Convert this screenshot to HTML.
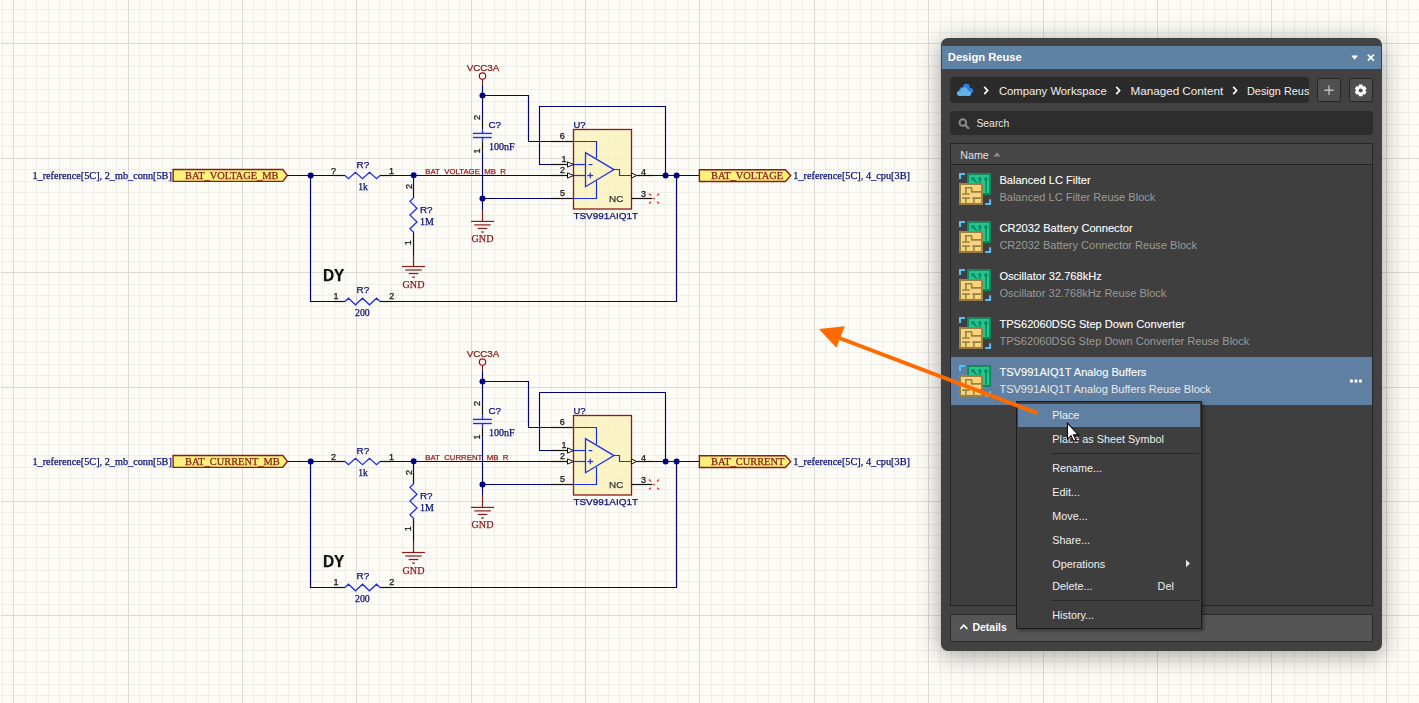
<!DOCTYPE html>
<html><head><meta charset="utf-8">
<style>
html,body{margin:0;padding:0;width:1419px;height:703px;overflow:hidden;background:#fdfbf6}
#root{position:relative;width:1419px;height:703px;overflow:hidden}
.ab{position:absolute;box-sizing:border-box}
.ui{font-family:'Liberation Sans',sans-serif;}
</style></head><body><div id="root">
<svg width="1419" height="703" viewBox="0 0 1419 703" style="position:absolute;left:0;top:0;will-change:transform">
<rect x="0" y="0" width="1419" height="703" fill="#fdfbf6"/>
<rect x="2" y="0" width="1" height="703" fill="#eeede8"/>
<rect x="25" y="0" width="1" height="703" fill="#eeede8"/>
<rect x="36" y="0" width="1" height="703" fill="#eeede8"/>
<rect x="48" y="0" width="1" height="703" fill="#eeede8"/>
<rect x="59" y="0" width="1" height="703" fill="#eeede8"/>
<rect x="70" y="0" width="1" height="703" fill="#eeede8"/>
<rect x="82" y="0" width="1" height="703" fill="#eeede8"/>
<rect x="93" y="0" width="1" height="703" fill="#eeede8"/>
<rect x="105" y="0" width="1" height="703" fill="#eeede8"/>
<rect x="116" y="0" width="1" height="703" fill="#eeede8"/>
<rect x="139" y="0" width="1" height="703" fill="#eeede8"/>
<rect x="151" y="0" width="1" height="703" fill="#eeede8"/>
<rect x="162" y="0" width="1" height="703" fill="#eeede8"/>
<rect x="173" y="0" width="1" height="703" fill="#eeede8"/>
<rect x="185" y="0" width="1" height="703" fill="#eeede8"/>
<rect x="196" y="0" width="1" height="703" fill="#eeede8"/>
<rect x="208" y="0" width="1" height="703" fill="#eeede8"/>
<rect x="219" y="0" width="1" height="703" fill="#eeede8"/>
<rect x="231" y="0" width="1" height="703" fill="#eeede8"/>
<rect x="253" y="0" width="1" height="703" fill="#eeede8"/>
<rect x="265" y="0" width="1" height="703" fill="#eeede8"/>
<rect x="276" y="0" width="1" height="703" fill="#eeede8"/>
<rect x="288" y="0" width="1" height="703" fill="#eeede8"/>
<rect x="299" y="0" width="1" height="703" fill="#eeede8"/>
<rect x="311" y="0" width="1" height="703" fill="#eeede8"/>
<rect x="322" y="0" width="1" height="703" fill="#eeede8"/>
<rect x="334" y="0" width="1" height="703" fill="#eeede8"/>
<rect x="345" y="0" width="1" height="703" fill="#eeede8"/>
<rect x="368" y="0" width="1" height="703" fill="#eeede8"/>
<rect x="379" y="0" width="1" height="703" fill="#eeede8"/>
<rect x="391" y="0" width="1" height="703" fill="#eeede8"/>
<rect x="402" y="0" width="1" height="703" fill="#eeede8"/>
<rect x="414" y="0" width="1" height="703" fill="#eeede8"/>
<rect x="425" y="0" width="1" height="703" fill="#eeede8"/>
<rect x="436" y="0" width="1" height="703" fill="#eeede8"/>
<rect x="448" y="0" width="1" height="703" fill="#eeede8"/>
<rect x="459" y="0" width="1" height="703" fill="#eeede8"/>
<rect x="482" y="0" width="1" height="703" fill="#eeede8"/>
<rect x="494" y="0" width="1" height="703" fill="#eeede8"/>
<rect x="505" y="0" width="1" height="703" fill="#eeede8"/>
<rect x="516" y="0" width="1" height="703" fill="#eeede8"/>
<rect x="528" y="0" width="1" height="703" fill="#eeede8"/>
<rect x="539" y="0" width="1" height="703" fill="#eeede8"/>
<rect x="551" y="0" width="1" height="703" fill="#eeede8"/>
<rect x="562" y="0" width="1" height="703" fill="#eeede8"/>
<rect x="574" y="0" width="1" height="703" fill="#eeede8"/>
<rect x="597" y="0" width="1" height="703" fill="#eeede8"/>
<rect x="608" y="0" width="1" height="703" fill="#eeede8"/>
<rect x="619" y="0" width="1" height="703" fill="#eeede8"/>
<rect x="631" y="0" width="1" height="703" fill="#eeede8"/>
<rect x="642" y="0" width="1" height="703" fill="#eeede8"/>
<rect x="654" y="0" width="1" height="703" fill="#eeede8"/>
<rect x="665" y="0" width="1" height="703" fill="#eeede8"/>
<rect x="677" y="0" width="1" height="703" fill="#eeede8"/>
<rect x="688" y="0" width="1" height="703" fill="#eeede8"/>
<rect x="711" y="0" width="1" height="703" fill="#eeede8"/>
<rect x="722" y="0" width="1" height="703" fill="#eeede8"/>
<rect x="734" y="0" width="1" height="703" fill="#eeede8"/>
<rect x="745" y="0" width="1" height="703" fill="#eeede8"/>
<rect x="757" y="0" width="1" height="703" fill="#eeede8"/>
<rect x="768" y="0" width="1" height="703" fill="#eeede8"/>
<rect x="780" y="0" width="1" height="703" fill="#eeede8"/>
<rect x="791" y="0" width="1" height="703" fill="#eeede8"/>
<rect x="802" y="0" width="1" height="703" fill="#eeede8"/>
<rect x="825" y="0" width="1" height="703" fill="#eeede8"/>
<rect x="837" y="0" width="1" height="703" fill="#eeede8"/>
<rect x="848" y="0" width="1" height="703" fill="#eeede8"/>
<rect x="860" y="0" width="1" height="703" fill="#eeede8"/>
<rect x="871" y="0" width="1" height="703" fill="#eeede8"/>
<rect x="882" y="0" width="1" height="703" fill="#eeede8"/>
<rect x="894" y="0" width="1" height="703" fill="#eeede8"/>
<rect x="905" y="0" width="1" height="703" fill="#eeede8"/>
<rect x="917" y="0" width="1" height="703" fill="#eeede8"/>
<rect x="940" y="0" width="1" height="703" fill="#eeede8"/>
<rect x="951" y="0" width="1" height="703" fill="#eeede8"/>
<rect x="962" y="0" width="1" height="703" fill="#eeede8"/>
<rect x="974" y="0" width="1" height="703" fill="#eeede8"/>
<rect x="985" y="0" width="1" height="703" fill="#eeede8"/>
<rect x="997" y="0" width="1" height="703" fill="#eeede8"/>
<rect x="1008" y="0" width="1" height="703" fill="#eeede8"/>
<rect x="1020" y="0" width="1" height="703" fill="#eeede8"/>
<rect x="1031" y="0" width="1" height="703" fill="#eeede8"/>
<rect x="1054" y="0" width="1" height="703" fill="#eeede8"/>
<rect x="1065" y="0" width="1" height="703" fill="#eeede8"/>
<rect x="1077" y="0" width="1" height="703" fill="#eeede8"/>
<rect x="1088" y="0" width="1" height="703" fill="#eeede8"/>
<rect x="1100" y="0" width="1" height="703" fill="#eeede8"/>
<rect x="1111" y="0" width="1" height="703" fill="#eeede8"/>
<rect x="1123" y="0" width="1" height="703" fill="#eeede8"/>
<rect x="1134" y="0" width="1" height="703" fill="#eeede8"/>
<rect x="1145" y="0" width="1" height="703" fill="#eeede8"/>
<rect x="1168" y="0" width="1" height="703" fill="#eeede8"/>
<rect x="1180" y="0" width="1" height="703" fill="#eeede8"/>
<rect x="1191" y="0" width="1" height="703" fill="#eeede8"/>
<rect x="1203" y="0" width="1" height="703" fill="#eeede8"/>
<rect x="1214" y="0" width="1" height="703" fill="#eeede8"/>
<rect x="1226" y="0" width="1" height="703" fill="#eeede8"/>
<rect x="1237" y="0" width="1" height="703" fill="#eeede8"/>
<rect x="1248" y="0" width="1" height="703" fill="#eeede8"/>
<rect x="1260" y="0" width="1" height="703" fill="#eeede8"/>
<rect x="1283" y="0" width="1" height="703" fill="#eeede8"/>
<rect x="1294" y="0" width="1" height="703" fill="#eeede8"/>
<rect x="1306" y="0" width="1" height="703" fill="#eeede8"/>
<rect x="1317" y="0" width="1" height="703" fill="#eeede8"/>
<rect x="1328" y="0" width="1" height="703" fill="#eeede8"/>
<rect x="1340" y="0" width="1" height="703" fill="#eeede8"/>
<rect x="1351" y="0" width="1" height="703" fill="#eeede8"/>
<rect x="1363" y="0" width="1" height="703" fill="#eeede8"/>
<rect x="1374" y="0" width="1" height="703" fill="#eeede8"/>
<rect x="1397" y="0" width="1" height="703" fill="#eeede8"/>
<rect x="1408" y="0" width="1" height="703" fill="#eeede8"/>
<rect x="1" y="9" width="1418" height="1" fill="#eeede8"/>
<rect x="1" y="21" width="1418" height="1" fill="#eeede8"/>
<rect x="1" y="32" width="1418" height="1" fill="#eeede8"/>
<rect x="1" y="55" width="1418" height="1" fill="#eeede8"/>
<rect x="1" y="66" width="1418" height="1" fill="#eeede8"/>
<rect x="1" y="78" width="1418" height="1" fill="#eeede8"/>
<rect x="1" y="89" width="1418" height="1" fill="#eeede8"/>
<rect x="1" y="101" width="1418" height="1" fill="#eeede8"/>
<rect x="1" y="112" width="1418" height="1" fill="#eeede8"/>
<rect x="1" y="124" width="1418" height="1" fill="#eeede8"/>
<rect x="1" y="135" width="1418" height="1" fill="#eeede8"/>
<rect x="1" y="146" width="1418" height="1" fill="#eeede8"/>
<rect x="1" y="169" width="1418" height="1" fill="#eeede8"/>
<rect x="1" y="181" width="1418" height="1" fill="#eeede8"/>
<rect x="1" y="192" width="1418" height="1" fill="#eeede8"/>
<rect x="1" y="204" width="1418" height="1" fill="#eeede8"/>
<rect x="1" y="215" width="1418" height="1" fill="#eeede8"/>
<rect x="1" y="226" width="1418" height="1" fill="#eeede8"/>
<rect x="1" y="238" width="1418" height="1" fill="#eeede8"/>
<rect x="1" y="249" width="1418" height="1" fill="#eeede8"/>
<rect x="1" y="261" width="1418" height="1" fill="#eeede8"/>
<rect x="1" y="284" width="1418" height="1" fill="#eeede8"/>
<rect x="1" y="295" width="1418" height="1" fill="#eeede8"/>
<rect x="1" y="306" width="1418" height="1" fill="#eeede8"/>
<rect x="1" y="318" width="1418" height="1" fill="#eeede8"/>
<rect x="1" y="329" width="1418" height="1" fill="#eeede8"/>
<rect x="1" y="341" width="1418" height="1" fill="#eeede8"/>
<rect x="1" y="352" width="1418" height="1" fill="#eeede8"/>
<rect x="1" y="364" width="1418" height="1" fill="#eeede8"/>
<rect x="1" y="375" width="1418" height="1" fill="#eeede8"/>
<rect x="1" y="398" width="1418" height="1" fill="#eeede8"/>
<rect x="1" y="409" width="1418" height="1" fill="#eeede8"/>
<rect x="1" y="421" width="1418" height="1" fill="#eeede8"/>
<rect x="1" y="432" width="1418" height="1" fill="#eeede8"/>
<rect x="1" y="444" width="1418" height="1" fill="#eeede8"/>
<rect x="1" y="455" width="1418" height="1" fill="#eeede8"/>
<rect x="1" y="467" width="1418" height="1" fill="#eeede8"/>
<rect x="1" y="478" width="1418" height="1" fill="#eeede8"/>
<rect x="1" y="489" width="1418" height="1" fill="#eeede8"/>
<rect x="1" y="512" width="1418" height="1" fill="#eeede8"/>
<rect x="1" y="524" width="1418" height="1" fill="#eeede8"/>
<rect x="1" y="535" width="1418" height="1" fill="#eeede8"/>
<rect x="1" y="547" width="1418" height="1" fill="#eeede8"/>
<rect x="1" y="558" width="1418" height="1" fill="#eeede8"/>
<rect x="1" y="570" width="1418" height="1" fill="#eeede8"/>
<rect x="1" y="581" width="1418" height="1" fill="#eeede8"/>
<rect x="1" y="592" width="1418" height="1" fill="#eeede8"/>
<rect x="1" y="604" width="1418" height="1" fill="#eeede8"/>
<rect x="1" y="627" width="1418" height="1" fill="#eeede8"/>
<rect x="1" y="638" width="1418" height="1" fill="#eeede8"/>
<rect x="1" y="650" width="1418" height="1" fill="#eeede8"/>
<rect x="1" y="661" width="1418" height="1" fill="#eeede8"/>
<rect x="1" y="672" width="1418" height="1" fill="#eeede8"/>
<rect x="1" y="684" width="1418" height="1" fill="#eeede8"/>
<rect x="1" y="695" width="1418" height="1" fill="#eeede8"/>
<rect x="13" y="0" width="1" height="703" fill="#dbdad6"/>
<rect x="128" y="0" width="1" height="703" fill="#dbdad6"/>
<rect x="242" y="0" width="1" height="703" fill="#dbdad6"/>
<rect x="356" y="0" width="1" height="703" fill="#dbdad6"/>
<rect x="471" y="0" width="1" height="703" fill="#dbdad6"/>
<rect x="585" y="0" width="1" height="703" fill="#dbdad6"/>
<rect x="699" y="0" width="1" height="703" fill="#dbdad6"/>
<rect x="814" y="0" width="1" height="703" fill="#dbdad6"/>
<rect x="928" y="0" width="1" height="703" fill="#dbdad6"/>
<rect x="1043" y="0" width="1" height="703" fill="#dbdad6"/>
<rect x="1157" y="0" width="1" height="703" fill="#dbdad6"/>
<rect x="1271" y="0" width="1" height="703" fill="#dbdad6"/>
<rect x="1386" y="0" width="1" height="703" fill="#dbdad6"/>
<rect x="1" y="43" width="1418" height="1" fill="#dbdad6"/>
<rect x="1" y="158" width="1418" height="1" fill="#dbdad6"/>
<rect x="1" y="272" width="1418" height="1" fill="#dbdad6"/>
<rect x="1" y="387" width="1418" height="1" fill="#dbdad6"/>
<rect x="1" y="501" width="1418" height="1" fill="#dbdad6"/>
<rect x="1" y="615" width="1418" height="1" fill="#dbdad6"/>
<text x="32.40" y="179.30" fill="#0b1078" font-family="'Liberation Serif', serif" font-size="10.25" font-weight="400"  stroke="#0b1078" stroke-width="0.25">1_reference[5C], 2_mb_conn[5B]</text>
<polygon points="173.1,169.5 282.8,169.5 287.3,175.45 282.8,181.4 173.1,181.4" fill="#fbf27a" stroke="#8c1a1a" stroke-width="1.4"/><text x="185.00" y="178.50" fill="#8c1a1a" font-family="'Liberation Serif', serif" font-size="10.4" font-weight="400"  stroke="#8c1a1a" stroke-width="0.25">BAT_VOLTAGE_MB</text>
<text x="425.30" y="173.70" fill="#9a1c1c" font-family="'Liberation Sans', sans-serif" font-size="7.8" font-weight="400" stroke="#9a1c1c" stroke-width="0.25">BAT_VOLTAGE_MB_R</text>
<polyline points="287.30,175.50 334.00,175.50" fill="none" stroke="#000080" stroke-width="1.15" stroke-linejoin="miter"/>
<polyline points="334.00,175.50 345.00,175.50" fill="none" stroke="#111" stroke-width="1.2" stroke-linejoin="miter"/>
<polyline points="345.00,175.50 348.50,178.70 355.50,172.30 362.50,178.70 369.50,172.30 376.50,178.70 380.00,175.50" fill="none" stroke="#1e2ef0" stroke-width="1.3" stroke-linejoin="miter"/>
<polyline points="380.00,175.50 391.00,175.50" fill="none" stroke="#111" stroke-width="1.2" stroke-linejoin="miter"/>
<polyline points="391.00,175.50 551.00,175.50" fill="none" stroke="#000080" stroke-width="1.15" stroke-linejoin="miter"/>
<text x="331.00" y="174.20" fill="#111" font-family="'Liberation Sans', sans-serif" font-size="9.0" font-weight="400"  stroke="#111" stroke-width="0.25">?</text>
<text x="389.00" y="173.60" fill="#111" font-family="'Liberation Sans', sans-serif" font-size="9.0" font-weight="400"  stroke="#111" stroke-width="0.25">1</text>
<text x="356.50" y="167.80" fill="#0b1078" font-family="'Liberation Sans', sans-serif" font-size="9.9" font-weight="400"  stroke="#0b1078" stroke-width="0.25">R?</text>
<text x="358.20" y="190.00" fill="#0b1078" font-family="'Liberation Serif', serif" font-size="9.6" font-weight="400"  stroke="#0b1078" stroke-width="0.25">1k</text>
<polyline points="310.50,175.50 310.50,301.50 334.00,301.50" fill="none" stroke="#000080" stroke-width="1.15" stroke-linejoin="miter"/>
<polyline points="334.00,301.50 345.00,301.50" fill="none" stroke="#111" stroke-width="1.2" stroke-linejoin="miter"/>
<polyline points="345.00,301.50 348.50,298.20 355.50,304.80 362.50,298.20 369.50,304.80 376.50,298.20 380.00,301.50" fill="none" stroke="#1e2ef0" stroke-width="1.3" stroke-linejoin="miter"/>
<polyline points="380.00,301.50 391.00,301.50" fill="none" stroke="#111" stroke-width="1.2" stroke-linejoin="miter"/>
<polyline points="391.00,301.50 676.50,301.50 676.50,175.50" fill="none" stroke="#000080" stroke-width="1.15" stroke-linejoin="miter"/>
<text x="333.50" y="298.60" fill="#111" font-family="'Liberation Sans', sans-serif" font-size="9.0" font-weight="400"  stroke="#111" stroke-width="0.25">1</text>
<text x="389.20" y="298.60" fill="#111" font-family="'Liberation Sans', sans-serif" font-size="9.0" font-weight="400"  stroke="#111" stroke-width="0.25">2</text>
<text x="356.50" y="292.80" fill="#0b1078" font-family="'Liberation Sans', sans-serif" font-size="9.9" font-weight="400"  stroke="#0b1078" stroke-width="0.25">R?</text>
<text x="355.00" y="316.00" fill="#0b1078" font-family="'Liberation Serif', serif" font-size="9.8" font-weight="400"  stroke="#0b1078" stroke-width="0.25">200</text>
<text x="322.90" y="280.90" fill="#111" font-family="'Liberation Sans', sans-serif" font-size="16.6" font-weight="700" textLength="21.4" lengthAdjust="spacingAndGlyphs" stroke="#111" stroke-width="0.25">DY</text>
<polyline points="413.50,175.50 413.50,186.80" fill="none" stroke="#000080" stroke-width="1.15" stroke-linejoin="miter"/>
<polyline points="413.50,186.80 413.50,197.90" fill="none" stroke="#111" stroke-width="1.2" stroke-linejoin="miter"/>
<polyline points="413.50,197.90 410.00,201.34 417.00,208.22 410.00,215.10 417.00,221.98 410.00,228.86 413.50,232.30" fill="none" stroke="#1e2ef0" stroke-width="1.3" stroke-linejoin="miter"/>
<polyline points="413.50,232.30 413.50,243.90" fill="none" stroke="#111" stroke-width="1.2" stroke-linejoin="miter"/>
<polyline points="413.50,243.90 413.50,255.00" fill="none" stroke="#000080" stroke-width="1.15" stroke-linejoin="miter"/>
<polyline points="413.50,255.00 413.50,266.50" fill="none" stroke="#8c1a1a" stroke-width="1.2" stroke-linejoin="miter"/>
<polyline points="402.00,266.50 425.00,266.50" fill="none" stroke="#8c1a1a" stroke-width="1.2" stroke-linejoin="miter"/><polyline points="405.30,270.00 421.70,270.00" fill="none" stroke="#8c1a1a" stroke-width="1.2" stroke-linejoin="miter"/><polyline points="408.70,273.55 418.30,273.55" fill="none" stroke="#8c1a1a" stroke-width="1.2" stroke-linejoin="miter"/><polyline points="412.10,277.10 414.90,277.10" fill="none" stroke="#8c1a1a" stroke-width="1.2" stroke-linejoin="miter"/><text x="413.50" y="287.90" fill="#8c1a1a" font-family="'Liberation Serif', serif" font-size="10.1" font-weight="400" text-anchor="middle" stroke="#8c1a1a" stroke-width="0.25">GND</text>
<text x="0" y="0" fill="#111" stroke="#111" stroke-width="0.25" font-family="'Liberation Sans', sans-serif" font-size="9.0" text-anchor="middle" dominant-baseline="central" transform="translate(408.50,186.50) rotate(-90)">2</text>
<text x="0" y="0" fill="#111" stroke="#111" stroke-width="0.25" font-family="'Liberation Sans', sans-serif" font-size="9.0" text-anchor="middle" dominant-baseline="central" transform="translate(408.20,242.80) rotate(-90)">1</text>
<text x="419.90" y="212.80" fill="#0b1078" font-family="'Liberation Sans', sans-serif" font-size="9.9" font-weight="400"  stroke="#0b1078" stroke-width="0.25">R?</text>
<text x="420.00" y="225.10" fill="#0b1078" font-family="'Liberation Serif', serif" font-size="10.0" font-weight="400"  stroke="#0b1078" stroke-width="0.25">1M</text>
<text x="483.00" y="71.00" fill="#8c1a1a" font-family="'Liberation Sans', sans-serif" font-size="9.8" font-weight="400" text-anchor="middle" stroke="#8c1a1a" stroke-width="0.25">VCC3A</text>
<circle cx="482.5" cy="76.10" r="3.2" fill="none" stroke="#8c1a1a" stroke-width="1.2"/>
<polyline points="482.50,79.30 482.50,84.50" fill="none" stroke="#8c1a1a" stroke-width="1.2" stroke-linejoin="miter"/>
<polyline points="482.50,84.50 482.50,118.90" fill="none" stroke="#000080" stroke-width="1.15" stroke-linejoin="miter"/>
<polyline points="482.50,118.90 482.50,129.20" fill="none" stroke="#111" stroke-width="1.2" stroke-linejoin="miter"/>
<polyline points="482.50,129.20 482.50,133.40" fill="none" stroke="#1e2ef0" stroke-width="1.3" stroke-linejoin="miter"/>
<polyline points="473.00,133.40 491.90,133.40" fill="none" stroke="#1e2ef0" stroke-width="1.4" stroke-linejoin="miter"/>
<polyline points="473.00,137.50 491.90,137.50" fill="none" stroke="#1e2ef0" stroke-width="1.4" stroke-linejoin="miter"/>
<polyline points="482.50,137.50 482.50,141.80" fill="none" stroke="#1e2ef0" stroke-width="1.3" stroke-linejoin="miter"/>
<polyline points="482.50,141.80 482.50,151.80" fill="none" stroke="#111" stroke-width="1.2" stroke-linejoin="miter"/>
<polyline points="482.50,151.80 482.50,209.00" fill="none" stroke="#000080" stroke-width="1.15" stroke-linejoin="miter"/>
<polyline points="482.50,209.00 482.50,221.40" fill="none" stroke="#8c1a1a" stroke-width="1.2" stroke-linejoin="miter"/>
<polyline points="471.00,221.40 494.00,221.40" fill="none" stroke="#8c1a1a" stroke-width="1.2" stroke-linejoin="miter"/><polyline points="474.30,224.90 490.70,224.90" fill="none" stroke="#8c1a1a" stroke-width="1.2" stroke-linejoin="miter"/><polyline points="477.70,228.45 487.30,228.45" fill="none" stroke="#8c1a1a" stroke-width="1.2" stroke-linejoin="miter"/><polyline points="481.10,232.00 483.90,232.00" fill="none" stroke="#8c1a1a" stroke-width="1.2" stroke-linejoin="miter"/><text x="482.50" y="241.90" fill="#8c1a1a" font-family="'Liberation Serif', serif" font-size="10.1" font-weight="400" text-anchor="middle" stroke="#8c1a1a" stroke-width="0.25">GND</text>
<text x="0" y="0" fill="#111" stroke="#111" stroke-width="0.25" font-family="'Liberation Sans', sans-serif" font-size="9.0" text-anchor="middle" dominant-baseline="central" transform="translate(476.60,117.60) rotate(-90)">2</text>
<text x="0" y="0" fill="#111" stroke="#111" stroke-width="0.25" font-family="'Liberation Sans', sans-serif" font-size="9.0" text-anchor="middle" dominant-baseline="central" transform="translate(476.60,151.00) rotate(-90)">1</text>
<text x="488.40" y="127.90" fill="#0b1078" font-family="'Liberation Sans', sans-serif" font-size="9.9" font-weight="400"  stroke="#0b1078" stroke-width="0.25">C?</text>
<text x="488.90" y="149.80" fill="#0b1078" font-family="'Liberation Serif', serif" font-size="10.0" font-weight="400"  stroke="#0b1078" stroke-width="0.25">100nF</text>
<polyline points="482.50,95.50 528.50,95.50 528.50,141.50 551.00,141.50" fill="none" stroke="#000080" stroke-width="1.15" stroke-linejoin="miter"/>
<polyline points="482.50,198.50 551.00,198.50" fill="none" stroke="#000080" stroke-width="1.15" stroke-linejoin="miter"/>
<polyline points="551.00,164.50 539.50,164.50 539.50,106.50 665.50,106.50 665.50,175.50" fill="none" stroke="#000080" stroke-width="1.15" stroke-linejoin="miter"/>
<polyline points="551.00,141.50 573.40,141.50" fill="none" stroke="#111" stroke-width="1.2" stroke-linejoin="miter"/>
<polyline points="551.00,164.50 573.40,164.50" fill="none" stroke="#111" stroke-width="1.2" stroke-linejoin="miter"/>
<polyline points="551.00,175.50 573.40,175.50" fill="none" stroke="#111" stroke-width="1.2" stroke-linejoin="miter"/>
<polyline points="551.00,198.50 573.40,198.50" fill="none" stroke="#111" stroke-width="1.2" stroke-linejoin="miter"/>
<rect x="573.5" y="129.50" width="58" height="79.5" fill="#f9f3bc" fill-opacity="0.8" stroke="#8c1a1a" stroke-width="1.3"/>
<text x="573.60" y="127.90" fill="#0b1078" font-family="'Liberation Sans', sans-serif" font-size="9.4" font-weight="400"  stroke="#0b1078" stroke-width="0.25">U?</text>
<text x="573.40" y="218.60" fill="#0b1078" font-family="'Liberation Sans', sans-serif" font-size="9.95" font-weight="400"  stroke="#0b1078" stroke-width="0.25">TSV991AIQ1T</text>
<polyline points="573.50,141.50 596.50,141.50 596.50,157.90" fill="none" stroke="#1e2ef0" stroke-width="1.2" stroke-linejoin="miter"/>
<polyline points="573.50,198.50 596.50,198.50 596.50,180.90" fill="none" stroke="#1e2ef0" stroke-width="1.2" stroke-linejoin="miter"/>
<polyline points="573.50,164.50 585.50,164.50" fill="none" stroke="#1e2ef0" stroke-width="1.2" stroke-linejoin="miter"/>
<polyline points="573.50,175.50 585.50,175.50" fill="none" stroke="#1e2ef0" stroke-width="1.2" stroke-linejoin="miter"/>
<polygon points="585.5,152.60 585.5,186.70 614,169.60" fill="none" stroke="#1e2ef0" stroke-width="1.3"/>
<polyline points="614.00,169.50 619.50,169.50 619.50,175.50 631.50,175.50" fill="none" stroke="#1e2ef0" stroke-width="1.2" stroke-linejoin="miter"/>
<polyline points="588.60,164.60 592.40,164.60" fill="none" stroke="#1e2ef0" stroke-width="1.2" stroke-linejoin="miter"/>
<polyline points="587.40,175.50 593.20,175.50" fill="none" stroke="#1e2ef0" stroke-width="1.2" stroke-linejoin="miter"/>
<polyline points="590.30,172.70 590.30,178.30" fill="none" stroke="#1e2ef0" stroke-width="1.2" stroke-linejoin="miter"/>
<polygon points="567.50,161.90 573.50,164.50 567.50,167.10" fill="#fcfbf6" stroke="#111" stroke-width="1"/>
<polygon points="567.50,172.90 573.50,175.50 567.50,178.10" fill="#fcfbf6" stroke="#111" stroke-width="1"/>
<polygon points="631.5,173.00 636.8,175.50 631.5,178.00" fill="#fbf7cc" stroke="#111" stroke-width="1"/>
<text x="609.00" y="201.90" fill="#333" font-family="'Liberation Sans', sans-serif" font-size="9.9" font-weight="400"  stroke="#333" stroke-width="0.25">NC</text>
<text x="559.80" y="138.90" fill="#111" font-family="'Liberation Sans', sans-serif" font-size="9.0" font-weight="400"  stroke="#111" stroke-width="0.25">6</text>
<text x="561.50" y="161.90" fill="#111" font-family="'Liberation Sans', sans-serif" font-size="9.0" font-weight="400"  stroke="#111" stroke-width="0.25">1</text>
<text x="560.00" y="173.40" fill="#111" font-family="'Liberation Sans', sans-serif" font-size="9.0" font-weight="400"  stroke="#111" stroke-width="0.25">2</text>
<text x="560.00" y="196.30" fill="#111" font-family="'Liberation Sans', sans-serif" font-size="9.0" font-weight="400"  stroke="#111" stroke-width="0.25">5</text>
<text x="641.00" y="174.50" fill="#111" font-family="'Liberation Sans', sans-serif" font-size="9.0" font-weight="400"  stroke="#111" stroke-width="0.25">4</text>
<text x="641.00" y="197.00" fill="#111" font-family="'Liberation Sans', sans-serif" font-size="9.0" font-weight="400"  stroke="#111" stroke-width="0.25">3</text>
<polyline points="631.50,198.50 652.40,198.50" fill="none" stroke="#111" stroke-width="1.2" stroke-linejoin="miter"/>
<path d="M649,193.50 L659,203.50 M659,193.50 L649,203.50" stroke="#ff2a2a" stroke-width="1.3" stroke-dasharray="3 3.6 1.4 3.6 3" fill="none"/>
<polyline points="636.80,175.50 653.00,175.50" fill="none" stroke="#111" stroke-width="1.2" stroke-linejoin="miter"/>
<polyline points="653.00,175.50 699.40,175.50" fill="none" stroke="#000080" stroke-width="1.15" stroke-linejoin="miter"/>
<circle cx="310.70" cy="175.40" r="3.0" fill="#000080"/>
<circle cx="413.70" cy="175.30" r="3.0" fill="#000080"/>
<circle cx="482.50" cy="95.50" r="3.0" fill="#000080"/>
<circle cx="482.50" cy="198.40" r="3.0" fill="#000080"/>
<circle cx="665.60" cy="175.40" r="3.0" fill="#000080"/>
<circle cx="676.60" cy="175.40" r="3.0" fill="#000080"/>
<polygon points="699.4,169.7 785.4,169.7 790.7,175.6 785.4,181.5 699.4,181.5" fill="#fbf27a" stroke="#8c1a1a" stroke-width="1.4"/><text x="711.00" y="178.60" fill="#8c1a1a" font-family="'Liberation Serif', serif" font-size="10.4" font-weight="400"  stroke="#8c1a1a" stroke-width="0.25">BAT_VOLTAGE</text>
<text x="793.30" y="179.30" fill="#0b1078" font-family="'Liberation Serif', serif" font-size="10.3" font-weight="400"  stroke="#0b1078" stroke-width="0.25">1_reference[5C], 4_cpu[3B]</text>
<text x="32.40" y="465.30" fill="#0b1078" font-family="'Liberation Serif', serif" font-size="10.25" font-weight="400"  stroke="#0b1078" stroke-width="0.25">1_reference[5C], 2_mb_conn[5B]</text>
<polygon points="173.1,455.5 282.8,455.5 287.3,461.45 282.8,467.4 173.1,467.4" fill="#fbf27a" stroke="#8c1a1a" stroke-width="1.4"/><text x="185.00" y="464.50" fill="#8c1a1a" font-family="'Liberation Serif', serif" font-size="10.4" font-weight="400"  stroke="#8c1a1a" stroke-width="0.25">BAT_CURRENT_MB</text>
<text x="425.30" y="459.70" fill="#9a1c1c" font-family="'Liberation Sans', sans-serif" font-size="7.8" font-weight="400" stroke="#9a1c1c" stroke-width="0.25">BAT_CURRENT_MB_R</text>
<polyline points="287.30,461.50 334.00,461.50" fill="none" stroke="#000080" stroke-width="1.15" stroke-linejoin="miter"/>
<polyline points="334.00,461.50 345.00,461.50" fill="none" stroke="#111" stroke-width="1.2" stroke-linejoin="miter"/>
<polyline points="345.00,461.50 348.50,464.70 355.50,458.30 362.50,464.70 369.50,458.30 376.50,464.70 380.00,461.50" fill="none" stroke="#1e2ef0" stroke-width="1.3" stroke-linejoin="miter"/>
<polyline points="380.00,461.50 391.00,461.50" fill="none" stroke="#111" stroke-width="1.2" stroke-linejoin="miter"/>
<polyline points="391.00,461.50 551.00,461.50" fill="none" stroke="#000080" stroke-width="1.15" stroke-linejoin="miter"/>
<text x="331.00" y="460.20" fill="#111" font-family="'Liberation Sans', sans-serif" font-size="9.0" font-weight="400"  stroke="#111" stroke-width="0.25">2</text>
<text x="389.00" y="459.60" fill="#111" font-family="'Liberation Sans', sans-serif" font-size="9.0" font-weight="400"  stroke="#111" stroke-width="0.25">1</text>
<text x="356.50" y="453.80" fill="#0b1078" font-family="'Liberation Sans', sans-serif" font-size="9.9" font-weight="400"  stroke="#0b1078" stroke-width="0.25">R?</text>
<text x="358.20" y="476.00" fill="#0b1078" font-family="'Liberation Serif', serif" font-size="9.6" font-weight="400"  stroke="#0b1078" stroke-width="0.25">1k</text>
<polyline points="310.50,461.50 310.50,587.50 334.00,587.50" fill="none" stroke="#000080" stroke-width="1.15" stroke-linejoin="miter"/>
<polyline points="334.00,587.50 345.00,587.50" fill="none" stroke="#111" stroke-width="1.2" stroke-linejoin="miter"/>
<polyline points="345.00,587.50 348.50,584.20 355.50,590.80 362.50,584.20 369.50,590.80 376.50,584.20 380.00,587.50" fill="none" stroke="#1e2ef0" stroke-width="1.3" stroke-linejoin="miter"/>
<polyline points="380.00,587.50 391.00,587.50" fill="none" stroke="#111" stroke-width="1.2" stroke-linejoin="miter"/>
<polyline points="391.00,587.50 676.50,587.50 676.50,461.50" fill="none" stroke="#000080" stroke-width="1.15" stroke-linejoin="miter"/>
<text x="333.50" y="584.60" fill="#111" font-family="'Liberation Sans', sans-serif" font-size="9.0" font-weight="400"  stroke="#111" stroke-width="0.25">1</text>
<text x="389.20" y="584.60" fill="#111" font-family="'Liberation Sans', sans-serif" font-size="9.0" font-weight="400"  stroke="#111" stroke-width="0.25">2</text>
<text x="356.50" y="578.80" fill="#0b1078" font-family="'Liberation Sans', sans-serif" font-size="9.9" font-weight="400"  stroke="#0b1078" stroke-width="0.25">R?</text>
<text x="355.00" y="602.00" fill="#0b1078" font-family="'Liberation Serif', serif" font-size="9.8" font-weight="400"  stroke="#0b1078" stroke-width="0.25">200</text>
<text x="322.90" y="566.90" fill="#111" font-family="'Liberation Sans', sans-serif" font-size="16.6" font-weight="700" textLength="21.4" lengthAdjust="spacingAndGlyphs" stroke="#111" stroke-width="0.25">DY</text>
<polyline points="413.50,461.50 413.50,472.80" fill="none" stroke="#000080" stroke-width="1.15" stroke-linejoin="miter"/>
<polyline points="413.50,472.80 413.50,483.90" fill="none" stroke="#111" stroke-width="1.2" stroke-linejoin="miter"/>
<polyline points="413.50,483.90 410.00,487.34 417.00,494.22 410.00,501.10 417.00,507.98 410.00,514.86 413.50,518.30" fill="none" stroke="#1e2ef0" stroke-width="1.3" stroke-linejoin="miter"/>
<polyline points="413.50,518.30 413.50,529.90" fill="none" stroke="#111" stroke-width="1.2" stroke-linejoin="miter"/>
<polyline points="413.50,529.90 413.50,541.00" fill="none" stroke="#000080" stroke-width="1.15" stroke-linejoin="miter"/>
<polyline points="413.50,541.00 413.50,552.50" fill="none" stroke="#8c1a1a" stroke-width="1.2" stroke-linejoin="miter"/>
<polyline points="402.00,552.50 425.00,552.50" fill="none" stroke="#8c1a1a" stroke-width="1.2" stroke-linejoin="miter"/><polyline points="405.30,556.00 421.70,556.00" fill="none" stroke="#8c1a1a" stroke-width="1.2" stroke-linejoin="miter"/><polyline points="408.70,559.55 418.30,559.55" fill="none" stroke="#8c1a1a" stroke-width="1.2" stroke-linejoin="miter"/><polyline points="412.10,563.10 414.90,563.10" fill="none" stroke="#8c1a1a" stroke-width="1.2" stroke-linejoin="miter"/><text x="413.50" y="573.90" fill="#8c1a1a" font-family="'Liberation Serif', serif" font-size="10.1" font-weight="400" text-anchor="middle" stroke="#8c1a1a" stroke-width="0.25">GND</text>
<text x="0" y="0" fill="#111" stroke="#111" stroke-width="0.25" font-family="'Liberation Sans', sans-serif" font-size="9.0" text-anchor="middle" dominant-baseline="central" transform="translate(408.50,472.50) rotate(-90)">2</text>
<text x="0" y="0" fill="#111" stroke="#111" stroke-width="0.25" font-family="'Liberation Sans', sans-serif" font-size="9.0" text-anchor="middle" dominant-baseline="central" transform="translate(408.20,528.80) rotate(-90)">1</text>
<text x="419.90" y="498.80" fill="#0b1078" font-family="'Liberation Sans', sans-serif" font-size="9.9" font-weight="400"  stroke="#0b1078" stroke-width="0.25">R?</text>
<text x="420.00" y="511.10" fill="#0b1078" font-family="'Liberation Serif', serif" font-size="10.0" font-weight="400"  stroke="#0b1078" stroke-width="0.25">1M</text>
<text x="483.00" y="357.00" fill="#8c1a1a" font-family="'Liberation Sans', sans-serif" font-size="9.8" font-weight="400" text-anchor="middle" stroke="#8c1a1a" stroke-width="0.25">VCC3A</text>
<circle cx="482.5" cy="362.10" r="3.2" fill="none" stroke="#8c1a1a" stroke-width="1.2"/>
<polyline points="482.50,365.30 482.50,370.50" fill="none" stroke="#8c1a1a" stroke-width="1.2" stroke-linejoin="miter"/>
<polyline points="482.50,370.50 482.50,404.90" fill="none" stroke="#000080" stroke-width="1.15" stroke-linejoin="miter"/>
<polyline points="482.50,404.90 482.50,415.20" fill="none" stroke="#111" stroke-width="1.2" stroke-linejoin="miter"/>
<polyline points="482.50,415.20 482.50,419.40" fill="none" stroke="#1e2ef0" stroke-width="1.3" stroke-linejoin="miter"/>
<polyline points="473.00,419.40 491.90,419.40" fill="none" stroke="#1e2ef0" stroke-width="1.4" stroke-linejoin="miter"/>
<polyline points="473.00,423.50 491.90,423.50" fill="none" stroke="#1e2ef0" stroke-width="1.4" stroke-linejoin="miter"/>
<polyline points="482.50,423.50 482.50,427.80" fill="none" stroke="#1e2ef0" stroke-width="1.3" stroke-linejoin="miter"/>
<polyline points="482.50,427.80 482.50,437.80" fill="none" stroke="#111" stroke-width="1.2" stroke-linejoin="miter"/>
<polyline points="482.50,437.80 482.50,495.00" fill="none" stroke="#000080" stroke-width="1.15" stroke-linejoin="miter"/>
<polyline points="482.50,495.00 482.50,507.40" fill="none" stroke="#8c1a1a" stroke-width="1.2" stroke-linejoin="miter"/>
<polyline points="471.00,507.40 494.00,507.40" fill="none" stroke="#8c1a1a" stroke-width="1.2" stroke-linejoin="miter"/><polyline points="474.30,510.90 490.70,510.90" fill="none" stroke="#8c1a1a" stroke-width="1.2" stroke-linejoin="miter"/><polyline points="477.70,514.45 487.30,514.45" fill="none" stroke="#8c1a1a" stroke-width="1.2" stroke-linejoin="miter"/><polyline points="481.10,518.00 483.90,518.00" fill="none" stroke="#8c1a1a" stroke-width="1.2" stroke-linejoin="miter"/><text x="482.50" y="527.90" fill="#8c1a1a" font-family="'Liberation Serif', serif" font-size="10.1" font-weight="400" text-anchor="middle" stroke="#8c1a1a" stroke-width="0.25">GND</text>
<text x="0" y="0" fill="#111" stroke="#111" stroke-width="0.25" font-family="'Liberation Sans', sans-serif" font-size="9.0" text-anchor="middle" dominant-baseline="central" transform="translate(476.60,403.60) rotate(-90)">2</text>
<text x="0" y="0" fill="#111" stroke="#111" stroke-width="0.25" font-family="'Liberation Sans', sans-serif" font-size="9.0" text-anchor="middle" dominant-baseline="central" transform="translate(476.60,437.00) rotate(-90)">1</text>
<text x="488.40" y="413.90" fill="#0b1078" font-family="'Liberation Sans', sans-serif" font-size="9.9" font-weight="400"  stroke="#0b1078" stroke-width="0.25">C?</text>
<text x="488.90" y="435.80" fill="#0b1078" font-family="'Liberation Serif', serif" font-size="10.0" font-weight="400"  stroke="#0b1078" stroke-width="0.25">100nF</text>
<polyline points="482.50,381.50 528.50,381.50 528.50,427.50 551.00,427.50" fill="none" stroke="#000080" stroke-width="1.15" stroke-linejoin="miter"/>
<polyline points="482.50,484.50 551.00,484.50" fill="none" stroke="#000080" stroke-width="1.15" stroke-linejoin="miter"/>
<polyline points="551.00,450.50 539.50,450.50 539.50,392.50 665.50,392.50 665.50,461.50" fill="none" stroke="#000080" stroke-width="1.15" stroke-linejoin="miter"/>
<polyline points="551.00,427.50 573.40,427.50" fill="none" stroke="#111" stroke-width="1.2" stroke-linejoin="miter"/>
<polyline points="551.00,450.50 573.40,450.50" fill="none" stroke="#111" stroke-width="1.2" stroke-linejoin="miter"/>
<polyline points="551.00,461.50 573.40,461.50" fill="none" stroke="#111" stroke-width="1.2" stroke-linejoin="miter"/>
<polyline points="551.00,484.50 573.40,484.50" fill="none" stroke="#111" stroke-width="1.2" stroke-linejoin="miter"/>
<rect x="573.5" y="415.50" width="58" height="79.5" fill="#f9f3bc" fill-opacity="0.8" stroke="#8c1a1a" stroke-width="1.3"/>
<text x="573.60" y="413.90" fill="#0b1078" font-family="'Liberation Sans', sans-serif" font-size="9.4" font-weight="400"  stroke="#0b1078" stroke-width="0.25">U?</text>
<text x="573.40" y="504.60" fill="#0b1078" font-family="'Liberation Sans', sans-serif" font-size="9.95" font-weight="400"  stroke="#0b1078" stroke-width="0.25">TSV991AIQ1T</text>
<polyline points="573.50,427.50 596.50,427.50 596.50,443.90" fill="none" stroke="#1e2ef0" stroke-width="1.2" stroke-linejoin="miter"/>
<polyline points="573.50,484.50 596.50,484.50 596.50,466.90" fill="none" stroke="#1e2ef0" stroke-width="1.2" stroke-linejoin="miter"/>
<polyline points="573.50,450.50 585.50,450.50" fill="none" stroke="#1e2ef0" stroke-width="1.2" stroke-linejoin="miter"/>
<polyline points="573.50,461.50 585.50,461.50" fill="none" stroke="#1e2ef0" stroke-width="1.2" stroke-linejoin="miter"/>
<polygon points="585.5,438.60 585.5,472.70 614,455.60" fill="none" stroke="#1e2ef0" stroke-width="1.3"/>
<polyline points="614.00,455.50 619.50,455.50 619.50,461.50 631.50,461.50" fill="none" stroke="#1e2ef0" stroke-width="1.2" stroke-linejoin="miter"/>
<polyline points="588.60,450.60 592.40,450.60" fill="none" stroke="#1e2ef0" stroke-width="1.2" stroke-linejoin="miter"/>
<polyline points="587.40,461.50 593.20,461.50" fill="none" stroke="#1e2ef0" stroke-width="1.2" stroke-linejoin="miter"/>
<polyline points="590.30,458.70 590.30,464.30" fill="none" stroke="#1e2ef0" stroke-width="1.2" stroke-linejoin="miter"/>
<polygon points="567.50,447.90 573.50,450.50 567.50,453.10" fill="#fcfbf6" stroke="#111" stroke-width="1"/>
<polygon points="567.50,458.90 573.50,461.50 567.50,464.10" fill="#fcfbf6" stroke="#111" stroke-width="1"/>
<polygon points="631.5,459.00 636.8,461.50 631.5,464.00" fill="#fbf7cc" stroke="#111" stroke-width="1"/>
<text x="609.00" y="487.90" fill="#333" font-family="'Liberation Sans', sans-serif" font-size="9.9" font-weight="400"  stroke="#333" stroke-width="0.25">NC</text>
<text x="559.80" y="424.90" fill="#111" font-family="'Liberation Sans', sans-serif" font-size="9.0" font-weight="400"  stroke="#111" stroke-width="0.25">6</text>
<text x="561.50" y="447.90" fill="#111" font-family="'Liberation Sans', sans-serif" font-size="9.0" font-weight="400"  stroke="#111" stroke-width="0.25">1</text>
<text x="560.00" y="459.40" fill="#111" font-family="'Liberation Sans', sans-serif" font-size="9.0" font-weight="400"  stroke="#111" stroke-width="0.25">2</text>
<text x="560.00" y="482.30" fill="#111" font-family="'Liberation Sans', sans-serif" font-size="9.0" font-weight="400"  stroke="#111" stroke-width="0.25">5</text>
<text x="641.00" y="460.50" fill="#111" font-family="'Liberation Sans', sans-serif" font-size="9.0" font-weight="400"  stroke="#111" stroke-width="0.25">4</text>
<text x="641.00" y="483.00" fill="#111" font-family="'Liberation Sans', sans-serif" font-size="9.0" font-weight="400"  stroke="#111" stroke-width="0.25">3</text>
<polyline points="631.50,484.50 652.40,484.50" fill="none" stroke="#111" stroke-width="1.2" stroke-linejoin="miter"/>
<path d="M649,479.50 L659,489.50 M659,479.50 L649,489.50" stroke="#ff2a2a" stroke-width="1.3" stroke-dasharray="3 3.6 1.4 3.6 3" fill="none"/>
<polyline points="636.80,461.50 653.00,461.50" fill="none" stroke="#111" stroke-width="1.2" stroke-linejoin="miter"/>
<polyline points="653.00,461.50 699.40,461.50" fill="none" stroke="#000080" stroke-width="1.15" stroke-linejoin="miter"/>
<circle cx="310.70" cy="461.40" r="3.0" fill="#000080"/>
<circle cx="413.70" cy="461.30" r="3.0" fill="#000080"/>
<circle cx="482.50" cy="381.50" r="3.0" fill="#000080"/>
<circle cx="482.50" cy="484.40" r="3.0" fill="#000080"/>
<circle cx="665.60" cy="461.40" r="3.0" fill="#000080"/>
<circle cx="676.60" cy="461.40" r="3.0" fill="#000080"/>
<polygon points="699.4,455.7 785.4,455.7 790.7,461.6 785.4,467.5 699.4,467.5" fill="#fbf27a" stroke="#8c1a1a" stroke-width="1.4"/><text x="711.00" y="464.60" fill="#8c1a1a" font-family="'Liberation Serif', serif" font-size="10.4" font-weight="400"  stroke="#8c1a1a" stroke-width="0.25">BAT_CURRENT</text>
<text x="793.30" y="465.30" fill="#0b1078" font-family="'Liberation Serif', serif" font-size="10.3" font-weight="400"  stroke="#0b1078" stroke-width="0.25">1_reference[5C], 4_cpu[3B]</text>
</svg>
<div class="ab" style="left:941px;top:38px;width:441px;height:612.5px;background:#424242;border-radius:7px;box-shadow:0 4px 24px rgba(0,0,0,0.36);"></div>
<div class="ab" style="left:942px;top:46px;width:439px;height:23px;background:#5f81a2;"></div>
<div class="ab" style="left:947.8px;top:52px;font-family:'Liberation Sans',sans-serif;font-size:11.2px;line-height:1;white-space:nowrap;color:#fff;font-weight:700;">Design Reuse</div>
<svg class="ab" style="left:1348px;top:52px" width="30" height="12" viewBox="0 0 30 12"><path d="M3.3,3.4 H10 L6.65,7.8 Z" fill="#fff"/><path d="M19.8,2.6 L25.8,8.6 M25.8,2.6 L19.8,8.6" stroke="#fff" stroke-width="1.6"/></svg>
<div class="ab" style="left:942px;top:69px;width:439px;height:580.5px;background:#414141;border-radius:0 0 6px 6px;"></div>
<div class="ab" style="left:950px;top:77px;width:359px;height:25.5px;background:#2b2b2b;border-radius:4px;overflow:hidden;"></div>
<svg class="ab" style="left:950px;top:76px" width="30" height="26" viewBox="950 76 30 26"><g fill="#2f7ee2"><circle cx="966.4" cy="87.2" r="3.4"/><circle cx="970.6" cy="90.6" r="2.6"/><circle cx="961.8" cy="89.6" r="2.4"/><rect x="961.8" y="88" width="9" height="5.2"/></g><g fill="#63b4e6"><circle cx="964.3" cy="90.8" r="3.6"/><circle cx="959.7" cy="93.2" r="2.7"/><circle cx="968.6" cy="93.4" r="2.5"/><rect x="959.7" y="91.5" width="8.9" height="4.4"/></g></svg>
<svg class="ab" style="left:982.0px;top:85px" width="8" height="11" viewBox="0 0 8 11"><path d="M2.2,1.8 L5.6,5.5 L2.2,9.2" fill="none" stroke="#fff" stroke-width="1.7"/></svg>
<svg class="ab" style="left:1114.0px;top:85px" width="8" height="11" viewBox="0 0 8 11"><path d="M2.2,1.8 L5.6,5.5 L2.2,9.2" fill="none" stroke="#fff" stroke-width="1.7"/></svg>
<svg class="ab" style="left:1231.0px;top:85px" width="8" height="11" viewBox="0 0 8 11"><path d="M2.2,1.8 L5.6,5.5 L2.2,9.2" fill="none" stroke="#fff" stroke-width="1.7"/></svg>
<div class="ab" style="left:998.9px;top:86px;font-family:'Liberation Sans',sans-serif;font-size:11.3px;line-height:1;white-space:nowrap;color:#f0f0f0;font-weight:400;">Company Workspace</div>
<div class="ab" style="left:1130.4px;top:85px;font-family:'Liberation Sans',sans-serif;font-size:11.7px;line-height:1;white-space:nowrap;color:#f0f0f0;font-weight:400;">Managed Content</div>
<div class="ab" style="left:1247px;top:77px;width:61.6px;height:25px;overflow:hidden"><div class="ab" style="left:0;top:9px;font-family:'Liberation Sans',sans-serif;font-size:10.9px;line-height:1;white-space:nowrap;color:#f0f0f0">Design Reuse</div></div>
<div class="ab" style="left:1317px;top:78px;width:24px;height:24px;background:#505050;border:1px solid #262626;border-radius:3px;"></div>
<svg class="ab" style="left:1317px;top:78px" width="24" height="24" viewBox="0 0 24 24"><path d="M12,7.6 V17 M7.3,12.3 H16.7" stroke="#bdbdbd" stroke-width="1.4"/></svg>
<div class="ab" style="left:1349px;top:78px;width:24px;height:24px;background:#505050;border:1px solid #262626;border-radius:3px;"></div>
<svg class="ab" style="left:1349.2px;top:78.6px" width="24" height="24" viewBox="0 0 24 24"><polygon points="9.64,7.63 9.90,5.57 13.50,5.57 13.76,7.63 13.94,7.73 15.85,6.93 17.65,10.05 16.00,11.30 16.00,11.50 17.65,12.75 15.85,15.87 13.94,15.07 13.76,15.17 13.50,17.23 9.90,17.23 9.64,15.17 9.46,15.07 7.55,15.87 5.75,12.75 7.40,11.50 7.40,11.30 5.75,10.05 7.55,6.93 9.46,7.73" fill="#fff"/><circle cx="11.7" cy="11.4" r="4.5" fill="#fff"/><circle cx="11.7" cy="11.4" r="2.0" fill="#505050"/></svg>
<div class="ab" style="left:950px;top:111px;width:423px;height:23.5px;background:#2d2d2d;border-radius:4px;"></div>
<svg class="ab" style="left:954px;top:114px" width="18" height="18" viewBox="954 114 18 18"><circle cx="962.8" cy="122.6" r="3.3" fill="none" stroke="#8e8e8e" stroke-width="1.9"/><path d="M965.3,125.1 L968.4,128.2" stroke="#8e8e8e" stroke-width="2.1" stroke-linecap="round"/></svg>
<div class="ab" style="left:976.4px;top:119px;font-family:'Liberation Sans',sans-serif;font-size:10.4px;line-height:1;white-space:nowrap;color:#e6e6e6;font-weight:400;">Search</div>
<div class="ab" style="left:950px;top:143px;width:423px;height:463px;background:#3f3f3f;border:1px solid #262626;"></div>
<div class="ab" style="left:951px;top:144px;width:421px;height:21px;background:#474747;border-bottom:1px solid #262626;"></div>
<div class="ab" style="left:960.3px;top:150px;font-family:'Liberation Sans',sans-serif;font-size:10.7px;line-height:1;white-space:nowrap;color:#e0e0e0;font-weight:400;">Name</div>
<svg class="ab" style="left:992px;top:151px" width="10" height="7" viewBox="0 0 10 7"><path d="M1.3,5.6 L5,1.2 L8.7,5.6 Z" fill="#8a8a8a"/></svg>
<div class="ab" style="left:959px;top:173.00px;width:33px;height:33px"><svg width="33" height="33" viewBox="0 0 33 33">
<path d="M1,6 V1 H6" fill="none" stroke="#5cc0f5" stroke-width="2"/>
<path d="M31.1,26.2 V30.9 H26.2" fill="none" stroke="#5cc0f5" stroke-width="2"/>
<rect x="9.1" y="1" width="22" height="19.9" fill="#22c890" stroke="#138a5c" stroke-width="2"/>
<circle cx="14" cy="5.9" r="1.9" fill="#138a5c"/><circle cx="20.8" cy="5.9" r="1.9" fill="#138a5c"/><circle cx="27" cy="5.9" r="1.9" fill="#138a5c"/>
<path d="M14,5.9 L18.5,10.5 M20.8,5.9 V12 M27,5.9 V19.5" fill="none" stroke="#138a5c" stroke-width="1.6"/>
<rect x="1" y="11" width="22" height="19.9" fill="#f8d47f" stroke="#9a8242" stroke-width="2"/>
<path d="M6.85,14.8 H12.7 M6.85,14.8 V21 M4,21 H10 M4,25.1 H10 M6.85,25.1 V30 M12.7,14.8 V18.9 M12.7,18.9 H22 M14,25.1 H22 M14.8,25.1 V30" fill="none" stroke="#9a8242" stroke-width="1.6" stroke-linecap="square"/>
</svg></div>
<div class="ab" style="left:999.4px;top:175px;font-family:'Liberation Sans',sans-serif;font-size:11.1px;line-height:1;white-space:nowrap;color:#ffffff;font-weight:400;-webkit-text-stroke:0.1px #fff;">Balanced LC Filter</div>
<div class="ab" style="left:999.4px;top:192px;font-family:'Liberation Sans',sans-serif;font-size:11.05px;line-height:1;white-space:nowrap;color:#9a9a9a;font-weight:400;">Balanced LC Filter Reuse Block</div>
<div class="ab" style="left:959px;top:221.00px;width:33px;height:33px"><svg width="33" height="33" viewBox="0 0 33 33">
<path d="M1,6 V1 H6" fill="none" stroke="#5cc0f5" stroke-width="2"/>
<path d="M31.1,26.2 V30.9 H26.2" fill="none" stroke="#5cc0f5" stroke-width="2"/>
<rect x="9.1" y="1" width="22" height="19.9" fill="#22c890" stroke="#138a5c" stroke-width="2"/>
<circle cx="14" cy="5.9" r="1.9" fill="#138a5c"/><circle cx="20.8" cy="5.9" r="1.9" fill="#138a5c"/><circle cx="27" cy="5.9" r="1.9" fill="#138a5c"/>
<path d="M14,5.9 L18.5,10.5 M20.8,5.9 V12 M27,5.9 V19.5" fill="none" stroke="#138a5c" stroke-width="1.6"/>
<rect x="1" y="11" width="22" height="19.9" fill="#f8d47f" stroke="#9a8242" stroke-width="2"/>
<path d="M6.85,14.8 H12.7 M6.85,14.8 V21 M4,21 H10 M4,25.1 H10 M6.85,25.1 V30 M12.7,14.8 V18.9 M12.7,18.9 H22 M14,25.1 H22 M14.8,25.1 V30" fill="none" stroke="#9a8242" stroke-width="1.6" stroke-linecap="square"/>
</svg></div>
<div class="ab" style="left:999.4px;top:223px;font-family:'Liberation Sans',sans-serif;font-size:11.1px;line-height:1;white-space:nowrap;color:#ffffff;font-weight:400;-webkit-text-stroke:0.1px #fff;">CR2032 Battery Connector</div>
<div class="ab" style="left:999.4px;top:240px;font-family:'Liberation Sans',sans-serif;font-size:11.05px;line-height:1;white-space:nowrap;color:#9a9a9a;font-weight:400;">CR2032 Battery Connector Reuse Block</div>
<div class="ab" style="left:959px;top:269.00px;width:33px;height:33px"><svg width="33" height="33" viewBox="0 0 33 33">
<path d="M1,6 V1 H6" fill="none" stroke="#5cc0f5" stroke-width="2"/>
<path d="M31.1,26.2 V30.9 H26.2" fill="none" stroke="#5cc0f5" stroke-width="2"/>
<rect x="9.1" y="1" width="22" height="19.9" fill="#22c890" stroke="#138a5c" stroke-width="2"/>
<circle cx="14" cy="5.9" r="1.9" fill="#138a5c"/><circle cx="20.8" cy="5.9" r="1.9" fill="#138a5c"/><circle cx="27" cy="5.9" r="1.9" fill="#138a5c"/>
<path d="M14,5.9 L18.5,10.5 M20.8,5.9 V12 M27,5.9 V19.5" fill="none" stroke="#138a5c" stroke-width="1.6"/>
<rect x="1" y="11" width="22" height="19.9" fill="#f8d47f" stroke="#9a8242" stroke-width="2"/>
<path d="M6.85,14.8 H12.7 M6.85,14.8 V21 M4,21 H10 M4,25.1 H10 M6.85,25.1 V30 M12.7,14.8 V18.9 M12.7,18.9 H22 M14,25.1 H22 M14.8,25.1 V30" fill="none" stroke="#9a8242" stroke-width="1.6" stroke-linecap="square"/>
</svg></div>
<div class="ab" style="left:999.4px;top:271px;font-family:'Liberation Sans',sans-serif;font-size:11.1px;line-height:1;white-space:nowrap;color:#ffffff;font-weight:400;-webkit-text-stroke:0.1px #fff;">Oscillator 32.768kHz</div>
<div class="ab" style="left:999.4px;top:288px;font-family:'Liberation Sans',sans-serif;font-size:11.05px;line-height:1;white-space:nowrap;color:#9a9a9a;font-weight:400;">Oscillator 32.768kHz Reuse Block</div>
<div class="ab" style="left:959px;top:317.00px;width:33px;height:33px"><svg width="33" height="33" viewBox="0 0 33 33">
<path d="M1,6 V1 H6" fill="none" stroke="#5cc0f5" stroke-width="2"/>
<path d="M31.1,26.2 V30.9 H26.2" fill="none" stroke="#5cc0f5" stroke-width="2"/>
<rect x="9.1" y="1" width="22" height="19.9" fill="#22c890" stroke="#138a5c" stroke-width="2"/>
<circle cx="14" cy="5.9" r="1.9" fill="#138a5c"/><circle cx="20.8" cy="5.9" r="1.9" fill="#138a5c"/><circle cx="27" cy="5.9" r="1.9" fill="#138a5c"/>
<path d="M14,5.9 L18.5,10.5 M20.8,5.9 V12 M27,5.9 V19.5" fill="none" stroke="#138a5c" stroke-width="1.6"/>
<rect x="1" y="11" width="22" height="19.9" fill="#f8d47f" stroke="#9a8242" stroke-width="2"/>
<path d="M6.85,14.8 H12.7 M6.85,14.8 V21 M4,21 H10 M4,25.1 H10 M6.85,25.1 V30 M12.7,14.8 V18.9 M12.7,18.9 H22 M14,25.1 H22 M14.8,25.1 V30" fill="none" stroke="#9a8242" stroke-width="1.6" stroke-linecap="square"/>
</svg></div>
<div class="ab" style="left:999.4px;top:319px;font-family:'Liberation Sans',sans-serif;font-size:11.1px;line-height:1;white-space:nowrap;color:#ffffff;font-weight:400;-webkit-text-stroke:0.1px #fff;">TPS62060DSG Step Down Converter</div>
<div class="ab" style="left:999.4px;top:336px;font-family:'Liberation Sans',sans-serif;font-size:11.05px;line-height:1;white-space:nowrap;color:#9a9a9a;font-weight:400;">TPS62060DSG Step Down Converter Reuse Block</div>
<div class="ab" style="left:951px;top:357px;width:421px;height:48px;background:#5f80a2;"></div>
<svg class="ab" style="left:1348px;top:377px" width="16" height="8" viewBox="0 0 16 8"><ellipse cx="3.4" cy="4" rx="1.6" ry="1.85" fill="#fff"/><ellipse cx="7.95" cy="4" rx="1.6" ry="1.85" fill="#fff"/><ellipse cx="12.5" cy="4" rx="1.6" ry="1.85" fill="#fff"/></svg>
<div class="ab" style="left:959px;top:365.00px;width:33px;height:33px"><svg width="33" height="33" viewBox="0 0 33 33">
<path d="M1,6 V1 H6" fill="none" stroke="#5cc0f5" stroke-width="2"/>
<path d="M31.1,26.2 V30.9 H26.2" fill="none" stroke="#5cc0f5" stroke-width="2"/>
<rect x="9.1" y="1" width="22" height="19.9" fill="#22c890" stroke="#138a5c" stroke-width="2"/>
<circle cx="14" cy="5.9" r="1.9" fill="#138a5c"/><circle cx="20.8" cy="5.9" r="1.9" fill="#138a5c"/><circle cx="27" cy="5.9" r="1.9" fill="#138a5c"/>
<path d="M14,5.9 L18.5,10.5 M20.8,5.9 V12 M27,5.9 V19.5" fill="none" stroke="#138a5c" stroke-width="1.6"/>
<rect x="1" y="11" width="22" height="19.9" fill="#f8d47f" stroke="#9a8242" stroke-width="2"/>
<path d="M6.85,14.8 H12.7 M6.85,14.8 V21 M4,21 H10 M4,25.1 H10 M6.85,25.1 V30 M12.7,14.8 V18.9 M12.7,18.9 H22 M14,25.1 H22 M14.8,25.1 V30" fill="none" stroke="#9a8242" stroke-width="1.6" stroke-linecap="square"/>
</svg></div>
<div class="ab" style="left:999.4px;top:367px;font-family:'Liberation Sans',sans-serif;font-size:11.1px;line-height:1;white-space:nowrap;color:#ffffff;font-weight:400;-webkit-text-stroke:0.1px #fff;">TSV991AIQ1T Analog Buffers</div>
<div class="ab" style="left:999.4px;top:384px;font-family:'Liberation Sans',sans-serif;font-size:11.05px;line-height:1;white-space:nowrap;color:#e8e8e8;font-weight:400;">TSV991AIQ1T Analog Buffers Reuse Block</div>
<div class="ab" style="left:950px;top:614px;width:423px;height:28px;background:#555555;border:1px solid #2a2a2a;"></div>
<svg class="ab" style="left:958px;top:621.5px" width="12" height="10" viewBox="0 0 12 10"><path d="M2.2,7 L5.8,3.2 L9.4,7" fill="none" stroke="#fff" stroke-width="1.6"/></svg>
<div class="ab" style="left:972.4px;top:622px;font-family:'Liberation Sans',sans-serif;font-size:10.5px;line-height:1;white-space:nowrap;color:#fff;font-weight:700;">Details</div>
<div class="ab" style="left:1016px;top:401px;width:186px;height:227.5px;background:#3e3e3e;border:1px solid #1c1c1c;box-shadow:2px 2px 3px rgba(0,0,0,0.35);"></div>
<div class="ab" style="left:1018px;top:404px;width:182px;height:23px;background:#5f80a2;"></div>
<div class="ab" style="left:1052.3px;top:410px;font-family:'Liberation Sans',sans-serif;font-size:10.8px;line-height:1;white-space:nowrap;color:#f0f0f0;font-weight:400;">Place</div>
<div class="ab" style="left:1052.3px;top:434px;font-family:'Liberation Sans',sans-serif;font-size:10.8px;line-height:1;white-space:nowrap;color:#f0f0f0;font-weight:400;">Place as Sheet Symbol</div>
<div class="ab" style="left:1052.3px;top:463px;font-family:'Liberation Sans',sans-serif;font-size:10.8px;line-height:1;white-space:nowrap;color:#f0f0f0;font-weight:400;">Rename...</div>
<div class="ab" style="left:1052.3px;top:487px;font-family:'Liberation Sans',sans-serif;font-size:10.8px;line-height:1;white-space:nowrap;color:#f0f0f0;font-weight:400;">Edit...</div>
<div class="ab" style="left:1052.3px;top:511px;font-family:'Liberation Sans',sans-serif;font-size:10.8px;line-height:1;white-space:nowrap;color:#f0f0f0;font-weight:400;">Move...</div>
<div class="ab" style="left:1052.3px;top:535px;font-family:'Liberation Sans',sans-serif;font-size:10.8px;line-height:1;white-space:nowrap;color:#f0f0f0;font-weight:400;">Share...</div>
<div class="ab" style="left:1052.3px;top:559px;font-family:'Liberation Sans',sans-serif;font-size:10.8px;line-height:1;white-space:nowrap;color:#f0f0f0;font-weight:400;">Operations</div>
<div class="ab" style="left:1052.3px;top:581px;font-family:'Liberation Sans',sans-serif;font-size:10.8px;line-height:1;white-space:nowrap;color:#f0f0f0;font-weight:400;">Delete...</div>
<div class="ab" style="left:1052.3px;top:610px;font-family:'Liberation Sans',sans-serif;font-size:10.8px;line-height:1;white-space:nowrap;color:#f0f0f0;font-weight:400;">History...</div>
<div class="ab" style="left:1157.6px;top:581px;font-family:'Liberation Sans',sans-serif;font-size:10.8px;line-height:1;white-space:nowrap;color:#f0f0f0;font-weight:400;">Del</div>
<div class="ab" style="left:1052.3px;top:453.1px;width:147.2px;height:1px;background:#262626;"></div>
<div class="ab" style="left:1052.3px;top:600.2px;width:147.2px;height:1px;background:#262626;"></div>
<svg class="ab" style="left:1184px;top:558px" width="8" height="11" viewBox="0 0 8 11"><path d="M2,1.8 L6,5.5 L2,9.2 Z" fill="#e8e8e8"/></svg>
<svg class="ab" style="left:0;top:0" width="1419" height="703" viewBox="0 0 1419 703"><path d="M1036,412.6 L838,337.5" stroke="#ff6a00" stroke-width="4" stroke-linecap="round"/><polygon points="818.9,328.9 844.8,326.3 836.4,347.8" fill="#ff6a00"/></svg>
<svg class="ab" style="left:1066px;top:422px" width="16" height="22" viewBox="0 0 16 22"><path d="M1.4,1.2 L1.5,17.3 L5,13.8 L7.6,19.2 L10,18.2 L7.5,12.8 L12.4,12.8 Z" fill="#fff" stroke="#0a0a0a" stroke-width="1.15" stroke-linejoin="miter"/></svg>
</div></body></html>
